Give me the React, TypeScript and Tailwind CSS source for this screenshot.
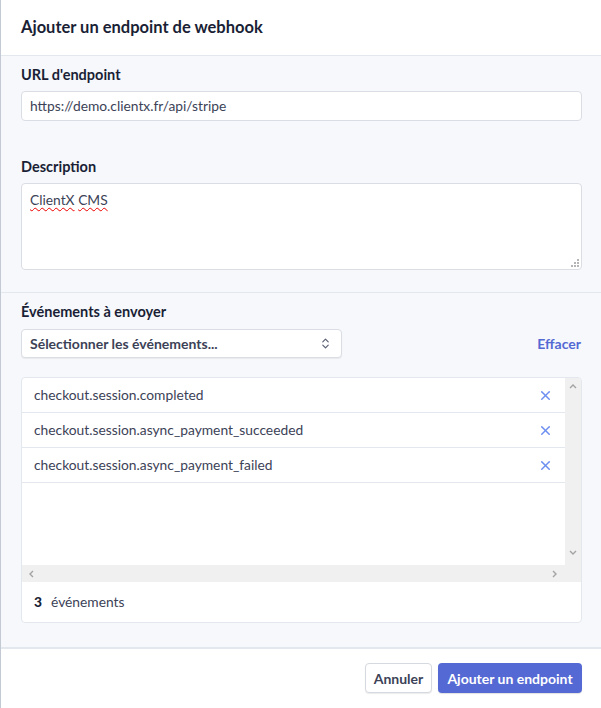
import { ChevronsUpDown, X } from "lucide-react";

const events = [
  "checkout.session.completed",
  "checkout.session.async_payment_succeeded",
  "checkout.session.async_payment_failed",
];

function ScrollArrow({ dir }: { dir: "up" | "down" | "left" | "right" }) {
  const paths = {
    up: "M1 5 L4 2 L7 5",
    down: "M1 2 L4 5 L7 2",
    left: "M5 1 L2 4 L5 7",
    right: "M2 1 L5 4 L2 7",
  };
  return (
    <svg width="8" height="8" viewBox="0 0 8 8" fill="none">
      <path d={paths[dir]} stroke="#a3a3a3" strokeWidth="1.4" />
    </svg>
  );
}

export default function App() {
  return (
    <div
      className="w-[601px] h-[708px] bg-white border-l border-[#c3cad3] flex flex-col text-[#1a1f36] overflow-hidden"
      style={{ fontFamily: 'Lato, "Noto Sans", sans-serif' }}
    >
      {/* en-tête */}
      <div className="h-[56px] shrink-0 flex items-center px-5 border-b border-[#e3e8ee]">
        <h1 className="text-[16.5px] font-bold">Ajouter un endpoint de webhook</h1>
      </div>

      <div className="bg-[#f6f8fb] flex-1 flex flex-col">
        <div className="px-5 pr-[19px] pt-[9px] pb-[22px] border-b border-[#e3e8ee]">
          <label className="block text-[14.5px] font-bold leading-5 mb-[6px]">URL d'endpoint</label>
          <div className="h-[30px] bg-white border border-[#dadde3] rounded-[4px] flex items-center px-2 text-[13.8px] text-[#3c4257]">
            https://demo.clientx.fr/api/stripe
          </div>

          <label className="block text-[14.5px] font-bold leading-5 mt-[36px] mb-[6px]">Description</label>
          <div className="relative h-[87px] bg-white border border-[#dadde3] rounded-[4px] px-2 pt-[6px] text-[13.8px] text-[#3c4257]">
            <span className="underline decoration-wavy decoration-[#e00] decoration-1 underline-offset-2">ClientX</span>{" "}
            <span className="underline decoration-wavy decoration-[#e00] decoration-1 underline-offset-2">CMS</span>
            <svg className="absolute right-[2px] bottom-[2px]" width="8" height="8" viewBox="0 0 8 8">
              <rect x="6" y="0" width="2" height="2" fill="#b5b5b5" />
              <rect x="3" y="3" width="2" height="2" fill="#b5b5b5" />
              <rect x="6" y="3" width="2" height="2" fill="#b5b5b5" />
              <rect x="0" y="6" width="2" height="2" fill="#b5b5b5" />
              <rect x="3" y="6" width="2" height="2" fill="#b5b5b5" />
              <rect x="6" y="6" width="2" height="2" fill="#b5b5b5" />
            </svg>
          </div>
        </div>

        <div className="px-5 pr-[19px] pt-[9px] pb-[24px] border-b-2 border-[#e3e8ee]">
          <label className="block text-[14.5px] font-bold leading-5 mb-[7px]">Événements à envoyer</label>
          <div className="flex items-center justify-between">
            <div className="w-[321px] h-[29px] bg-white border border-[#dadde3] rounded-[4px] shadow-[0_1px_1px_rgba(0,0,0,0.06)] flex items-center justify-between pl-2 pr-[9px] text-[14px] font-bold text-[#3c4257]">
              <span>Sélectionner les événements...</span>
              <ChevronsUpDown size={13} strokeWidth={2.2} className="text-[#5a6072]" />
            </div>
            <button className="text-[14px] font-bold text-[#5469d4] pr-[1px]">Effacer</button>
          </div>

          <div className="mt-[19px] h-[246px] bg-white border border-[#e3e8ee] rounded-[4px] flex flex-col overflow-hidden">
            <div className="flex h-[204px]">
              <div className="flex-1 flex flex-col">
                <div className="flex-1">
                  {events.map((e) => (
                    <div
                      key={e}
                      className="h-[35px] border-b border-[#e3e8ee] flex items-center justify-between pl-3 pr-[12px] text-[13.8px] text-[#3c4257]"
                    >
                      <span>{e}</span>
                      <X size={15} strokeWidth={2.4} className="text-[#6c8ef0]" />
                    </div>
                  ))}
                </div>
                <div className="h-[17px] bg-[#f0f0f0] flex items-center justify-between px-[6px]">
                  <ScrollArrow dir="left" />
                  <ScrollArrow dir="right" />
                </div>
              </div>
              <div className="w-[16px] bg-[#f0f0f0] flex flex-col items-center justify-between pt-[5px] pb-[25px]">
                <ScrollArrow dir="up" />
                <ScrollArrow dir="down" />
              </div>
            </div>
            <div className="flex-1 flex items-center px-3 text-[13.8px] text-[#3c4257]">
              <span className="font-black text-[#1a1f36] mr-[9px]">3</span>
              <span>événements</span>
            </div>
          </div>
        </div>

        <div className="bg-white flex-1 flex items-center justify-end gap-[6px] pr-[19px] pb-[1px]">
          <button className="h-[30px] w-[67px] bg-white border border-[#d5d9e0] rounded-[4px] shadow-[0_1px_1px_rgba(0,0,0,0.08)] text-[14px] font-bold text-[#3c4257]">
            Annuler
          </button>
          <button className="h-[30px] w-[144px] bg-[#5469d4] rounded-[4px] shadow-[0_1px_1px_rgba(0,0,0,0.12)] text-[14px] font-bold text-white">
            Ajouter un endpoint
          </button>
        </div>
      </div>
    </div>
  );
}
